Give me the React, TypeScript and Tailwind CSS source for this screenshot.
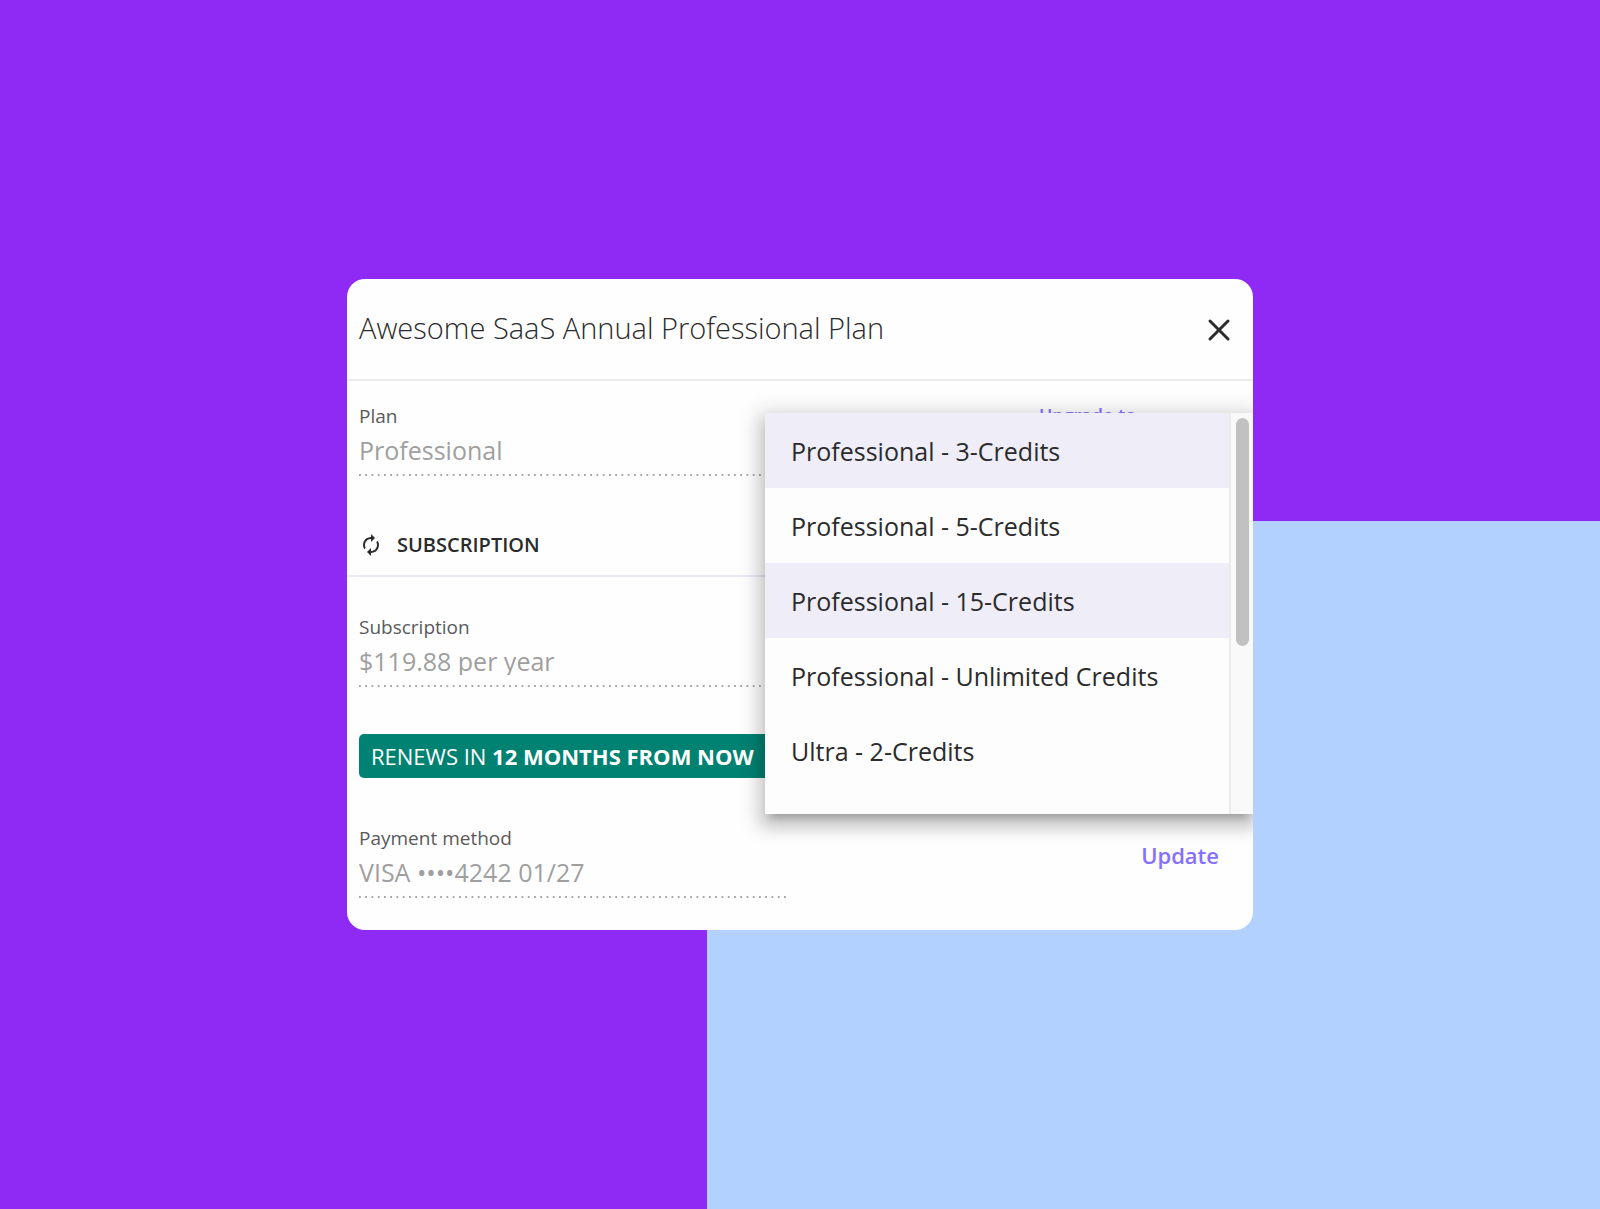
import { useState } from 'react';
import { X } from 'lucide-react';
import { MdAutorenew } from 'react-icons/md';
import clsx from 'clsx';

const PLAN_OPTIONS = [
  'Professional - 3-Credits',
  'Professional - 5-Credits',
  'Professional - 15-Credits',
  'Professional - Unlimited Credits',
  'Ultra - 2-Credits',
];

interface FieldProps {
  id: string;
  label: string;
  value: string;
}

const Field = ({ id, label, value }: FieldProps) => (
  <div className="flex w-[428px] max-w-full flex-col">
    <label htmlFor={id} className="text-[19px] leading-6 text-[#5a5a5a]">
      {label}
    </label>
    <input
      id={id}
      readOnly
      value={value}
      className="mt-2 h-7 w-full bg-transparent text-[25px] leading-7 text-[#9f9f9f] outline-none"
    />
    <div className="mt-2.5 h-0.5 bg-[linear-gradient(to_right,#a6a6a6_2px,transparent_2px)] bg-[length:calc((100%_-_2px)/68)_2px] bg-repeat-x" />
  </div>
);

const PlanMenu = () => {
  const [selected, setSelected] = useState(PLAN_OPTIONS[0]);
  const [active, setActive] = useState(PLAN_OPTIONS[2]);

  return (
    <div className="absolute top-8 right-0 flex h-[401px] w-[488px] bg-[#fdfdfd] shadow-[0_8px_8px_-5px_rgba(0,0,0,0.2),0_10px_16px_3px_rgba(0,0,0,0.14),0_5px_20px_8px_rgba(0,0,0,0.12)]">
      <div role="listbox" aria-labelledby="upgrade-label" className="flex flex-1 flex-col">
        {PLAN_OPTIONS.map((option) => (
          <button
            key={option}
            type="button"
            role="option"
            aria-selected={option === selected}
            onClick={() => setSelected(option)}
            onMouseEnter={() => setActive(option)}
            className={clsx(
              'h-[75px] px-[26px] pt-0.5 text-left text-[25px] text-[#2b2b2b]',
              (option === selected || option === active) && 'bg-[#efeef8]',
            )}
          >
            {option}
          </button>
        ))}
      </div>
      <div className="w-6 border-l-2 border-[#ebebeb] bg-[#f9f9f9] px-1 pt-[5px]">
        <div className="ml-px h-[228px] w-[13px] rounded-full bg-[#c1c1c1]" />
      </div>
    </div>
  );
};

const App = () => {
  return (
    <main className="relative flex min-h-screen items-center justify-center overflow-hidden bg-[#8f2af5] font-['Open_Sans',sans-serif]">
      <div className="absolute right-0 bottom-0 h-[688px] w-[893px] bg-[#b2d1ff]" />

      <section className="relative w-[906px] max-w-full overflow-hidden rounded-[18px] bg-[#fefefe] pb-8">
        <header className="flex h-[102px] items-center justify-between border-b-2 border-[#ebebee] pr-4 pl-3">
          <h1 className="pb-0.5 text-[29px] font-light text-[#2b2b2b]">
            Awesome SaaS Annual Professional Plan
          </h1>
          <button type="button" aria-label="Close" className="pt-0.5">
            <X className="size-9 text-[#2b2b2b]" />
          </button>
        </header>

        <div className="relative">
          <div className="flex items-start px-3 pt-[23px]">
            <Field id="plan" label="Plan" value="Professional" />
            <span
              id="upgrade-label"
              className="ml-[252px] text-[18px] leading-[22px] font-semibold text-[#8570ff]"
            >
              Upgrade to
            </span>
          </div>
          <PlanMenu />
        </div>

        <h2 className="mt-[57px] flex items-center gap-[14px] border-b-2 border-[#eaeaf4] px-3 pb-[18px] text-[20px] leading-6 font-semibold text-[#2b2b2b]">
          <MdAutorenew className="size-6" />
          SUBSCRIPTION
        </h2>

        <div className="px-3 pt-[38px]">
          <Field id="subscription" label="Subscription" value="$119.88 per year" />
          <p className="mt-[47px] inline-block rounded-[5px] bg-[#008272] pr-6 pl-3 text-[22px] leading-[44px] text-white">
            RENEWS IN <strong className="font-bold">12 MONTHS FROM NOW</strong>
          </p>
        </div>

        <div className="mt-12 flex items-start justify-between pr-[34px] pl-3">
          <Field id="payment" label="Payment method" value="VISA ••••4242 01/27" />
          <button type="button" className="py-3.5 text-[22px] leading-[30px] font-semibold text-[#8570ff]">
            Update
          </button>
        </div>
      </section>
    </main>
  );
};

export default App;
